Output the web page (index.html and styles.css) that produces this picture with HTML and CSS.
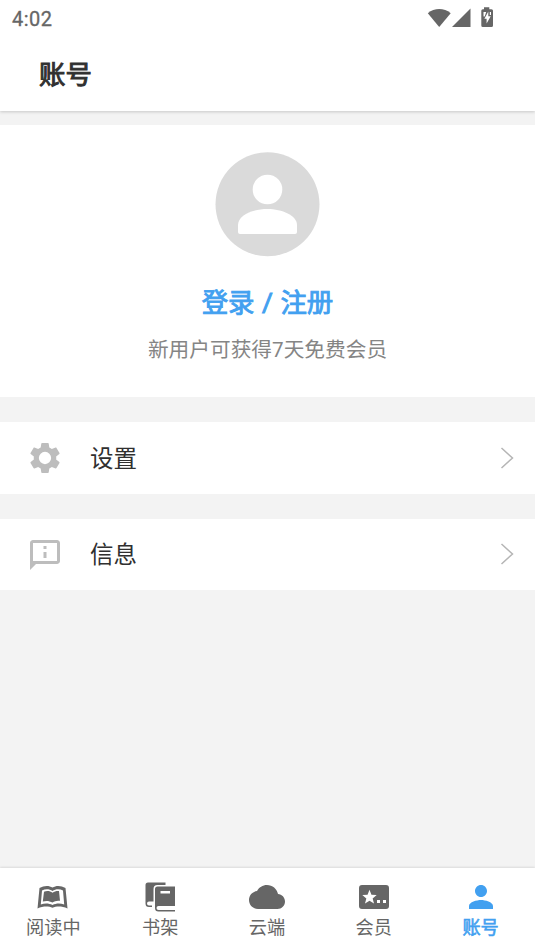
FILE: index.html
```html
<!DOCTYPE html>
<html lang="zh-CN">
<head>
<meta charset="utf-8">
<title>账号</title>
<link rel="stylesheet" href="styles.css">
</head>
<body>
<div class="app">
  <header class="top">
    <div class="status">
      <span class="clock">4:02</span>
      <svg class="status-icons" width="68" height="24" viewBox="0 0 68 24">
        <path d="M.8 8.300C7.500 2.700 17 2.700 23.700 8.300L12.200 22z"/>
        <path d="M43.500 3.500v18.500H25z"/>
        <path fill-rule="evenodd" d="M57 2.200h5.300v2h2.200q1.500 0 1.500 1.500v14.700q0 1.500-1.500 1.500h-8.700q-1.500 0-1.500-1.500V5.700q0-1.500 1.500-1.500H57zM56.500 7v4.500h1.200l1.500-4.500zM61.300 6.500l-3.900 7.300h2.200v4.700l4.100-7.300h-2.400zM62.800 7v3h1.200V7z"/>
      </svg>
    </div>
    <h1 class="title">账号</h1>
  </header>

  <main class="content">
    <section class="profile">
      <svg class="avatar" width="105" height="105" viewBox="0 0 105 105">
        <circle class="disc" cx="52.500" cy="52.300" r="52"/>
        <circle class="figure" cx="52.500" cy="37.500" r="14.800"/>
        <path class="figure" d="M23 73C23 63.500 38 57 52.500 57S82 63.500 82 73v7q0 2-2 2H25q-2 0-2-2z"/>
      </svg>
      <a class="login">登录 / 注册</a>
      <p class="promo">新用户可获得7天免费会员</p>
    </section>

    <a class="row">
      <svg class="row-icon" viewBox="0 0 24 24"><path fill-rule="evenodd" d="M19.430 12.980c.04-.32.070-.64.070-.98s-.03-.66-.070-.98l2.110-1.650c.19-.15.240-.42.120-.64l-2-3.460c-.12-.22-.39-.3-.61-.22l-2.490 1c-.52-.4-1.080-.73-1.690-.98l-.38-2.650C14.460 2.180 14.250 2 14 2h-4c-.25 0-.46.180-.49.420l-.38 2.650c-.61.250-1.170.590-1.690.980l-2.490-1c-.23-.09-.49 0-.61.220l-2 3.460c-.13.220-.07.490.12.640l2.110 1.650c-.04.320-.07.650-.07.980s.03.660.070.980l-2.110 1.650c-.19.150-.24.420-.12.640l2 3.460c.12.220.39.300.61.220l2.490-1c.52.400 1.080.730 1.690.980l.38 2.650c.03.240.24.420.49.420h4c.25 0 .46-.18.490-.42l.38-2.650c.61-.25 1.170-.59 1.690-.98l2.490 1c.23.090.49 0 .61-.22l2-3.460c.12-.22.070-.49-.12-.64zM12 16.100a4.100 4.100 0 1 1 0-8.200 4.100 4.100 0 0 1 0 8.200z"/></svg>
      <span class="row-label">设置</span>
      <svg class="chevron" width="14" height="22" viewBox="0 0 14 22"><path d="M1.500 1l11 10-11 10"/></svg>
    </a>

    <a class="row">
      <svg class="row-icon message" viewBox="0 0 24 24"><path fill-rule="evenodd" d="M20 2H4c-1.100 0-2 .9-2 2v18l4-4h14c1.100 0 2-.9 2-2V4c0-1.100-.9-2-2-2zm0 14H4V4h16zM11 6h2v2h-2zm0 4h2v4h-2z"/></svg>
      <span class="row-label">信息</span>
      <svg class="chevron" width="14" height="22" viewBox="0 0 14 22"><path d="M1.500 1l11 10-11 10"/></svg>
    </a>
  </main>

  <nav class="tabs">
    <a class="tab">
      <svg viewBox="0 0 36 36"><path fill-rule="evenodd" d="M4.500 9C9 6.300 14 6.300 17.500 8.500 21 6.300 26 6.300 30.500 9L32.500 29.500C27 27 21.500 27 17.500 28.800 13.500 27 8 27 2.500 29.500zM7 11.500L5.800 25.500C10 24 14 24.300 17.500 26 21 24.300 25 24 29.200 25.500L28 11.500C24.500 9.800 20.500 10 17.500 12 14.500 10 10.500 9.800 7 11.500z"/><path d="M9 12.800C12 11.600 15 12 17.500 13.800 19.500 12.300 21.500 11.800 24 12L25 21.800C22 21.300 19.800 22 17.500 23.500 14.500 21.800 11 21.500 7.800 22.500z"/></svg>
      <span>阅读中</span>
    </a>
    <a class="tab">
      <svg viewBox="0 0 36 36"><path d="M6 3.500H23.500V6H15.500Q11.500 6 11.500 10V22.500H7Q5 22.500 5 24.500T7 26.500H10V28H7Q3.500 28 3.500 24.500V6Q3.500 3.500 6 3.500z"/><path fill-rule="evenodd" d="M15.500 7.500H33V27H16.500Q14.500 27 14.500 29T16.500 31H33V32.500H16.500Q13 32.500 13 29V10Q13 7.500 15.500 7.500zM18.500 12V14.500H28V12z"/></svg>
      <span>书架</span>
    </a>
    <a class="tab">
      <svg viewBox="0 0 24 24"><path d="M19.350 10.040C18.670 6.590 15.640 4 12 4 9.110 4 6.600 5.640 5.350 8.040 2.340 8.360 0 10.910 0 14c0 3.310 2.690 6 6 6h13c2.760 0 5-2.240 5-5 0-2.640-2.050-4.780-4.650-4.960z"/></svg>
      <span>云端</span>
    </a>
    <a class="tab">
      <svg viewBox="0 0 24 24"><path fill-rule="evenodd" d="M4 4h16q2 0 2 2v12q0 2-2 2H4q-2 0-2-2V6q0-2 2-2zM9 7.200L7.700 10.500 4.200 10.700 6.900 13 6 16.400 9 14.500 12 16.400 11.100 13 13.800 10.700 10.300 10.500zM14 14v2h2v-2zM18 14v2h2v-2z"/></svg>
      <span>会员</span>
    </a>
    <a class="tab active">
      <svg viewBox="0 0 24 24"><path d="M12 12c2.210 0 4-1.790 4-4s-1.790-4-4-4-4 1.790-4 4 1.790 4 4 4zm0 2c-2.670 0-8 1.340-8 4v2h16v-2c0-2.660-5.330-4-8-4z"/></svg>
      <span>账号</span>
    </a>
  </nav>
</div>
</body>
</html>
```
FILE: styles.css
```css
* { box-sizing: border-box; }

body {
  margin: 0;
  font-family: Roboto, "Noto Sans CJK SC", sans-serif;
  color: #303030;
}

.app {
  display: flex;
  flex-direction: column;
  height: 951px;
  background: #f3f3f3;
}

.top {
  flex: none;
  height: 111px;
  background: #fff;
  box-shadow: 0 1px 3px rgba(0, 0, 0, .18);
}

.status {
  display: flex;
  justify-content: space-between;
  height: 38px;
  padding: 5px 40px 0 12px;
}

.clock {
  font-size: 20px;
  line-height: 28px;
  letter-spacing: .5px;
  color: #666;
  -webkit-text-stroke: .3px #666;
}

.status-icons { fill: #666; }

.title {
  margin: 0 0 0 39px;
  font-size: 26.400px;
  line-height: 74px;
  font-weight: 400;
  -webkit-text-stroke: 1px currentColor;
}

.content {
  flex: 1;
  display: flex;
  flex-direction: column;
  gap: 25px;
  padding-top: 14px;
}

.profile {
  display: flex;
  flex-direction: column;
  align-items: center;
  height: 272px;
  padding-top: 27px;
  background: #fff;
}

.disc { fill: #dadada; }
.figure { fill: #fff; }

.login {
  margin-top: 26px;
  font-size: 26.400px;
  line-height: 40px;
  word-spacing: 1px;
  -webkit-text-stroke: .9px currentColor;
  color: #42a0f0;
}

.promo {
  margin: 10px 0 0;
  font-size: 20.700px;
  line-height: 34px;
  color: #858585;
}

.row {
  display: flex;
  align-items: center;
  height: 71.500px;
  padding: 0 21px 0 26.500px;
  background: #fff;
}

.row-icon {
  width: 36px;
  height: 36px;
  fill: #bdbdbd;
}

.message { margin-top: 2px; }

.row-label {
  flex: 1;
  margin: 2px 0 0 27.500px;
  font-size: 23.500px;
  line-height: 34px;
}

.chevron {
  fill: none;
  stroke: #b5b5b5;
  stroke-width: 1.500;
}

.tabs {
  flex: none;
  display: flex;
  height: 83px;
  padding: 11px 1px 0 0;
  background: #fff;
  box-shadow: 0 -1px 2px rgba(0, 0, 0, .1);
}

.tab {
  flex: 1;
  display: flex;
  flex-direction: column;
  align-items: center;
  font-size: 18.200px;
  line-height: 26px;
  color: #666;
}

.tab svg {
  width: 36px;
  height: 36px;
  fill: #666;
}

.active { color: #42a0f0; -webkit-text-stroke: .6px currentColor; }
.active svg { fill: #42a0f0; -webkit-text-stroke: 0; }
```
